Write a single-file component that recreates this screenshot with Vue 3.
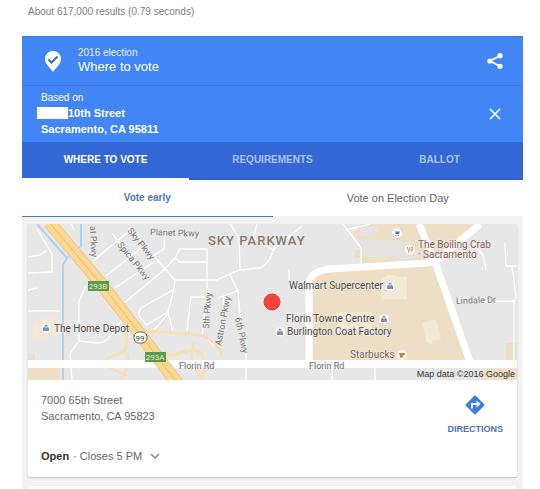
<script setup>
import { ref } from 'vue';

const tabs = ['Where to vote', 'Requirements', 'Ballot'];
const periods = ['Vote early', 'Vote on Election Day'];
const activeTab = ref(0);
const activePeriod = ref(0);

// Residential streets, drawn as thin white lines
const streets = [
  'M0 33 L12 31 L19 26',
  'M9 5 L24 30 V48 L0 49',
  'M0 87 H32',
  'M0 66 L10 64',
  'M58 62 L51 77 V117 L70 119 Q82 118 88 102 L95 97',
  'M50 118 L42 130 L44 156',
  'M43 0 L46 6',
  'M65 37 L100 8',
  'M78 52 L112 25',
  'M87 64 L127 37',
  'M96 79 L136 46',
  'M100 4 L125 31 L147 56 H189 L204 49 L212 46 L232 44 Q243 38 245 26 L225 14 L229 0',
  'M84 9 L120 55',
  'M147 56 L145 69 L140 88 L145 108',
  'M145 66 L113 84 Q108 89 114 96 L119 101 L140 88',
  'M125 107 L140 90',
  'M135 47 L147 34 L152 25 H179 V71 L174 111 L187 122',
  'M147 34 L152 38 H179',
  'M128 5 L137 10 L136 25 L119 36',
  'M159 107 L163 73 H177',
  'M212 46 L211 14 L202 0',
  'M202 51 L210 67 L212 91 L218 124 V156',
  'M190 74 L209 67',
  'M196 72 L190 121',
  'M245 26 L274 2',
  'M261 45 V56',
  'M304 144 V156',
  'M347 144 V156',
  'M315 0 L333 24 V42',
  'M317 6 L342 0',
  'M445 19 L455 31 L458 46',
  'M477 19 L478 42 H489',
  'M484 42 L488 73 L486 78 V138',
  'M429 78 L486 77',
];

const ramps = [
  'M114 106 Q138 109 162 110 T194 131',
  'M96 103 Q102 116 96 127 L72 138 L98 152',
  'M120 115 Q130 138 156 128 T174 156',
  'M166 118 Q158 140 176 156',
  'M98 128 Q104 142 92 156',
];

const streetLabels = [
  { text: 'at Pkwy', x: 62, y: 2, angle: 88 },
  { text: 'Sky Pkwy', x: 99, y: 7, angle: 51 },
  { text: 'Spica Pkwy', x: 89, y: 21, angle: 51 },
  { text: 'Planet Pkwy', x: 122, y: 11, angle: 2 },
  { text: '5th Pkwy', x: 181, y: 105, angle: -86 },
  { text: 'Astron Pkwy', x: 193, y: 122, angle: -79 },
  { text: '6th Pkwy', x: 207, y: 94, angle: 78 },
  { text: 'Lindale Dr', x: 428, y: 80, angle: -2 },
  { text: 'Florin Rd', x: 151, y: 145, angle: 0 },
  { text: 'Florin Rd', x: 281, y: 145, angle: 0 },
];

const places = [
  { text: 'The Home Depot', x: 26, y: 108, icon: [18, 104], kind: 'shop' },
  { text: 'Walmart Supercenter', x: 261, y: 65, icon: [362, 62], kind: 'shop' },
  { text: 'Florin Towne Centre', x: 258, y: 98, icon: [356, 95], kind: 'shop' },
  { text: 'Burlington Coat Factory', x: 259, y: 111, icon: [252, 108], kind: 'shop' },
  { text: 'Starbucks', x: 322, y: 134, icon: [374, 131], kind: 'cafe' },
  { text: 'The Boiling Crab', x: 390, y: 24, icon: [382, 26], kind: 'food' },
  { text: '· Sacramento', x: 390, y: 34 },
  { text: '', x: 0, y: 0, icon: [369, 9], kind: 'cart' },
];

const isFood = (place) => place.kind === 'cafe' || place.kind === 'food' || place.text.includes('Sacramento');
</script>

<template>
  <main class="page">
    <p class="stats">About 617,000 results (0.79 seconds)</p>

    <section class="panel">
      <header class="title-row">
        <svg class="pin" viewBox="0 0 16 21" aria-hidden="true">
          <path d="M8 0C3.5 0 0 3.5 0 8c0 5 4.5 8 8 13 3.5-5 8-8 8-13 0-4.500-3.500-8-8-8z" fill="#fff" />
          <path d="M3.5 8.5l3 3 6-6" fill="none" stroke="#3b69b8" stroke-width="2" />
        </svg>
        <div class="title-text">
          <p class="kicker">2016 election</p>
          <h1>Where to vote</h1>
        </div>
        <button class="icon-button" type="button" aria-label="Share">
          <svg viewBox="0 0 16 16" class="share">
            <path d="M13 2.7L3 8l10 5.3" fill="none" stroke="#fff" stroke-width="1.8" />
            <circle cx="13" cy="2.7" r="2.6" fill="#fff" />
            <circle cx="3" cy="8" r="2.6" fill="#fff" />
            <circle cx="13" cy="13.3" r="2.6" fill="#fff" />
          </svg>
        </button>
      </header>

      <div class="based-on">
        <div class="based-text">
          <p class="based-label">Based on</p>
          <p class="address-line"><span class="redacted"></span>10th Street</p>
          <p class="address-line">Sacramento, CA 95811</p>
        </div>
        <button class="icon-button" type="button" aria-label="Clear address">
          <svg viewBox="0 0 12 12" class="close">
            <path d="M1 1l10 10M11 1L1 11" fill="none" stroke="#fff" stroke-width="1.7" />
          </svg>
        </button>
      </div>

      <nav class="tabs">
        <button
          v-for="(tab, i) in tabs"
          :key="tab"
          type="button"
          :class="['tab', { active: activeTab === i }]"
          @click="activeTab = i"
        >{{ tab }}</button>
      </nav>

      <div class="periods">
        <button
          v-for="(period, i) in periods"
          :key="period"
          type="button"
          :class="['period', { active: activePeriod === i }]"
          @click="activePeriod = i"
        >{{ period }}</button>
      </div>

      <div class="results">
        <article class="card">
          <svg class="map" viewBox="0 0 489 156" role="img" aria-label="Map of Sky Parkway">
            <rect width="489" height="156" fill="#e7e7e7" />

            <!-- Commercial areas -->
            <g fill="#eddec5">
              <path d="M285 138V56q2-7 14-8l106-8 37 98z" />
              <path d="M323 8l9-4V0h58l12 20-4 18-66 4v-8h-5v-8l12-2z" />
              <path d="M393 0h57l-34 30-8 4z" />
              <path d="M277 82h5v50h-5zM478 119h11v18h-11zM454 145h35v11h-35zM0 144h32v12H0zM0 129h7v7H0z" />
            </g>
            <path d="M332 14l50 4 12 14-22 6-8-5h-32z" fill="#e4e3e1" />
            <path d="M332 3l18-1v8l-18 2z" fill="#e8e4dd" />
            <g fill="#f4e8d6">
              <path d="M5 98l8-2v-4h14v5h12v14H24l-4 5H5z" />
              <path d="M353 55l7-4h8v2h11v22h-26z" />
              <path d="M394 99l14-4 5 20-9 2v3l-5-1z" />
              <path d="M308 88h36v20h-36z" />
              <path d="M408 8h12l4 8-14 4z" fill="#e7dfd1" />
            </g>

            <!-- Waterways -->
            <path d="M9 0L39 34L35 41V156M53 0V22L39 34" fill="none" stroke="#b2cfee" stroke-width="2" />

            <!-- Roads -->
            <g class="roads" stroke="#fff">
              <path v-for="d in streets" :key="d" :d="d" stroke-width="1.3" />
              <path d="M281 138V60Q282 47 302 45L399 39Q410 37 418 29L452 0" stroke-width="7" />
              <path d="M391 0L407 38L442 138" stroke-width="7" />
            </g>
            <g class="roads" stroke="#f6dfb6">
              <path v-for="d in ramps" :key="d" :d="d" stroke-width="3" />
            </g>
            <path d="M0 140H489" stroke="#fff" stroke-width="8" />
            <g class="roads">
              <path d="M21 -2L74 61L112 110L150 160" stroke="#f0c890" stroke-width="13" />
              <path d="M21 -2L74 61L112 110L150 160" stroke="#fbd893" stroke-width="11" />
              <path d="M21 -2L74 61L112 110L150 160" stroke="#edb870" stroke-width="1" />
            </g>

            <!-- Highway shields -->
            <g class="exit">
              <rect x="60" y="57" width="21" height="10" />
              <text x="70" y="65">293B</text>
              <rect x="117" y="128" width="21" height="10" />
              <text x="127" y="136">293A</text>
            </g>
            <rect x="106" y="108" width="13" height="11" rx="5" fill="#fff" stroke="#666" />
            <text x="112" y="117" class="shield">99</text>

            <!-- Labels -->
            <text
              v-for="label in streetLabels"
              :key="label.text + label.x"
              class="street-label"
              :transform="`translate(${label.x} ${label.y}) rotate(${label.angle})`"
            >{{ label.text }}</text>
            <text x="180" y="21" class="district">SKY PARKWAY</text>
            <g v-for="place in places" :key="place.text">
              <g v-if="place.icon" :transform="`translate(${place.icon[0]} ${place.icon[1]})`">
                <circle r="5" fill="#fff" stroke="#dcdcdc" stroke-width="0.5" />
                <path v-if="place.kind === 'shop'" d="M-3 -.5h1.5v-1.5a1.5 1.5 0 0 1 3 0v1.5H3V3h-6zM-.7 -.5h1.4v-1.300h-1.400z" fill="#7f8fb5" fill-rule="evenodd" />
                <path v-else-if="place.kind === 'cafe'" d="M-3 -2h6v2H1.5l-1 2h-2.5zM-2.500 2.500h4v.5h-4z" fill="#c28132" />
                <path v-else-if="place.kind === 'food'" d="M-2.5 -3v2.500h2v-2.500M-1.5 -1V3M1 3v-6h1.500v3.500h-1.500" fill="none" stroke="#c9a550" stroke-width=".9" />
                <path v-else d="M-3.5 -2.500h1l.5 1H3L2 1h-3.500l-.5-2.500zM-1.500 2h1v1h-1zM1 2h1v1h-1z" fill="#5c75b5" />
              </g>
              <text :x="place.x" :y="place.y" :class="['place', { food: isFood(place) }]">{{ place.text }}</text>
            </g>
            <circle cx="244" cy="78" r="8" fill="#f2443c" stroke="#cf4540" />
            <text x="487" y="153" class="credit">Map data ©2016 Google</text>
          </svg>

          <div class="details">
            <address>
              7000 65th Street<br>
              Sacramento, CA 95823
            </address>
            <a class="directions" href="#directions">
              <svg viewBox="0 0 20 20" aria-hidden="true">
                <path d="M10 1.5L18.5 10L10 18.5L1.5 10z" fill="#3f7de0" stroke="#3f7de0" stroke-width="2" stroke-linejoin="round" />
                <path d="M7 13.5V9h5" fill="none" stroke="#fff" stroke-width="2" />
                <path d="M11.5 5.5L15.5 9L11.5 12.5z" fill="#fff" />
              </svg>
              DIRECTIONS
            </a>
          </div>

          <button class="hours" type="button">
            <strong>Open</strong> · Closes 5 PM
            <svg viewBox="0 0 10 6" aria-hidden="true">
              <path d="M1 1l4 4 4-4" fill="none" stroke="#888" stroke-width="1.5" />
            </svg>
          </button>
        </article>
        <article class="card next"></article>
      </div>
    </section>
  </main>
</template>

<style>
html,
body {
  background: #fff;
}
body {
  overflow: hidden;
}
</style>

<style scoped>
.page {
  padding: 4px 17px 0 22px;
  font-family: "Liberation Sans", Arial, sans-serif;
  font-size: 11px;
  line-height: 16px;
  color: #666;
}
p,
h1 {
  margin: 0;
}
button {
  font: inherit;
  color: inherit;
  background: none;
  border: 0;
  padding: 0;
  cursor: pointer;
}
svg {
  display: block;
}
.stats {
  padding-left: 6px;
  margin-bottom: 16px;
  font-size: 10px;
  color: #808080;
}
.panel {
  background: #f2f2f2;
}
.title-row,
.based-on {
  display: flex;
  align-items: center;
  background: #4285f4;
  color: #fff;
}
.title-row {
  height: 50px;
  box-sizing: border-box;
  border-bottom: 1px solid #3b78e7;
  border-top: 1px solid #3b78e7;
}
.pin {
  width: 16px;
  height: 21px;
  margin: 0 17px 0 23px;
}
.title-text,
.based-text {
  flex: 1;
}
.kicker {
  font-size: 10px;
  line-height: 12px;
  color: #e3edfd;
}
h1 {
  font-size: 13px;
  font-weight: normal;
  line-height: 16px;
}
.icon-button {
  width: 24px;
  height: 24px;
  margin-right: 16px;
  display: flex;
  align-items: center;
  justify-content: center;
}
.share {
  width: 16px;
  height: 16px;
}
.close {
  width: 12px;
  height: 12px;
}
.based-on {
  padding: 5px 0 5px 19px;
}
.based-label {
  font-size: 10px;
  line-height: 14px;
}
.address-line {
  display: flex;
  align-items: center;
  font-weight: bold;
}
.redacted {
  width: 31px;
  height: 12px;
  margin-left: -4px;
  background: #fff;
}
.tabs {
  display: grid;
  grid-template-columns: repeat(3, 1fr);
  background: #3367d6;
}
.tab {
  height: 38px;
  padding-bottom: 1px;
  border-bottom: 2px solid #2f5ec4;
  font-size: 10px;
  font-weight: bold;
  text-transform: uppercase;
  color: #a9c3f5;
}
.tab.active {
  color: #fff;
  border-color: #fff;
}
.periods {
  display: grid;
  grid-template-columns: 1fr 1fr;
  background: #fff;
}
.period {
  height: 37px;
  border-bottom: 1px solid #f2f2f2;
}
.period.active {
  font-size: 10px;
  font-weight: bold;
  color: #4a78b8;
  border-color: #4a7bbf;
}
.results {
  padding: 7px 6px 0;
}
.card {
  background: #fff;
  border-radius: 2px;
  box-shadow: 0 1px 2px rgba(0, 0, 0, 0.2);
  margin-bottom: 9px;
}
.next {
  height: 24px;
  margin-bottom: 0;
}
.map {
  width: 100%;
  height: auto;
  font-family: Roboto, sans-serif;
}
.roads {
  fill: none;
  stroke-linejoin: round;
}
.exit rect {
  fill: #5a9a48;
}
.exit text {
  fill: #e3f0dc;
  font-size: 8px;
  text-anchor: middle;
}
.shield {
  font-size: 8px;
  fill: #444;
  text-anchor: middle;
}
.street-label {
  font-size: 9px;
  fill: #777;
  stroke: #ededed;
  stroke-width: 1px;
  paint-order: stroke;
}
.district {
  font-size: 12px;
  font-size: 13px;
  font-weight: 500;
  letter-spacing: 1px;
  fill: #8d7868;
}
.place {
  font-size: 10px;
  fill: #4c4c4c;
  stroke: #f2eee8;
  stroke-width: 1px;
  paint-order: stroke;
}
.food {
  fill: #85605a;
}
.credit {
  font-family: "Liberation Sans", Arial, sans-serif;
  font-size: 9px;
  fill: #333;
  text-anchor: end;
}
.details {
  display: flex;
  justify-content: space-between;
  padding: 12px 14px 0 13px;
}
address {
  font-style: normal;
}
.directions {
  display: flex;
  flex-direction: column;
  align-items: center;
  gap: 6px;
  padding-top: 3px;
  font-size: 9px;
  font-weight: bold;
  color: #4a78b8;
  text-decoration: none;
}
.directions svg {
  width: 20px;
  height: 20px;
}
.hours {
  display: flex;
  align-items: center;
  gap: 4px;
  padding: 11px 13px 13px;
}
.hours strong {
  color: #333;
}
.hours svg {
  width: 10px;
  height: 6px;
  margin-left: 4px;
}
</style>
